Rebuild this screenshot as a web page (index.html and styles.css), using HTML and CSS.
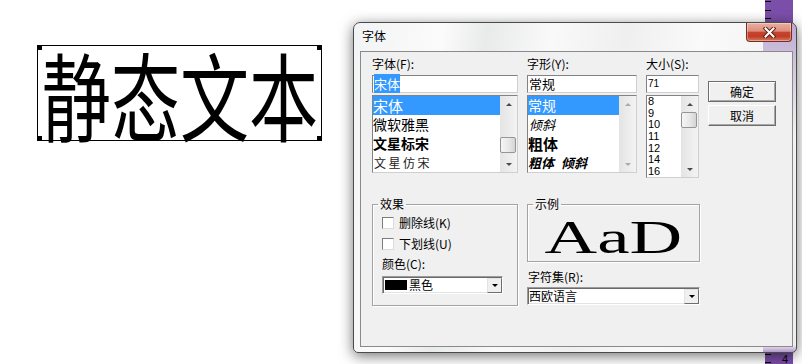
FILE: index.html
```html
<!DOCTYPE html>
<html lang="zh-CN">
<head>
<meta charset="UTF-8">
<title>字体</title>
<link rel="stylesheet" href="styles.css">
</head>
<body>
<div id="desktop">
  <div class="ruler"><span class="ruler-num">4</span></div>

  <div class="static-box">
    <span class="handle tl"></span>
    <span class="handle tr"></span>
    <span class="handle bl"></span>
    <span class="handle br"></span>
    <div class="static-text">静态文本</div>
  </div>

  <div class="dialog">
    <div class="titlebar">
      <span class="title">字体</span>
      <button class="close">
        <svg width="13" height="11" viewBox="0 0 13 11">
          <path d="M2.5 1.5 L10.5 9.5 M10.5 1.5 L2.5 9.5" stroke="#5e2116" stroke-width="4" stroke-linecap="square"/>
          <path d="M2.5 1.5 L10.5 9.5 M10.5 1.5 L2.5 9.5" stroke="#fff" stroke-width="2" stroke-linecap="square"/>
        </svg>
      </button>
    </div>

    <div class="client">
      <div class="top">
        <div class="col col-font">
          <label>字体(F):</label>
          <div class="edit"><span class="sel">宋体</span></div>
          <div class="listbox">
            <ul class="items fonts">
              <li class="selected">宋体</li>
              <li class="yahei">微软雅黑</li>
              <li class="biaosong">文星标宋</li>
              <li class="fangsong">文星仿宋</li>
            </ul>
            <div class="vscroll">
              <span class="arrow up"></span>
              <div class="track"><span class="thumb"></span></div>
              <span class="arrow down"></span>
            </div>
          </div>
        </div>

        <div class="col col-style">
          <label>字形(Y):</label>
          <div class="edit">常规</div>
          <div class="listbox">
            <ul class="items styles">
              <li class="selected">常规</li>
              <li class="italic">倾斜</li>
              <li class="bold">粗体</li>
              <li class="bold-italic">粗体 倾斜</li>
            </ul>
            <div class="vscroll disabled">
              <span class="arrow up"></span>
              <div class="track"></div>
              <span class="arrow down"></span>
            </div>
          </div>
        </div>

        <div class="col col-size">
          <label>大小(S):</label>
          <div class="edit num">71</div>
          <div class="listbox tall">
            <ul class="items sizes">
              <li>8</li>
              <li>9</li>
              <li>10</li>
              <li>11</li>
              <li>12</li>
              <li>14</li>
              <li>16</li>
            </ul>
            <div class="vscroll">
              <span class="arrow up"></span>
              <div class="track"><span class="thumb"></span></div>
              <span class="arrow down"></span>
            </div>
          </div>
        </div>

        <div class="col col-btns">
          <button class="btn default">确定</button>
          <button class="btn">取消</button>
        </div>
      </div>

      <div class="bottom">
        <fieldset class="group effects">
          <legend>效果</legend>
          <div class="group-body">
            <div class="check"><span class="box"></span>删除线(K)</div>
            <div class="check"><span class="box"></span>下划线(U)</div>
            <div class="color-label">颜色(C):</div>
            <div class="combo color">
              <span class="swatch"></span>
              <span>黑色</span>
              <span class="drop"></span>
            </div>
          </div>
        </fieldset>

        <div class="right-col">
          <fieldset class="group sample">
            <legend>示例</legend>
            <div class="sample-body"><span class="sample-text">AaD</span></div>
          </fieldset>
          <div class="charset-label">字符集(R):</div>
          <div class="combo charset">
            <span>西欧语言</span>
            <span class="drop"></span>
          </div>
        </div>
      </div>
    </div>
  </div>
</div>
</body>
</html>
```

FILE: styles.css
```css
* {
  box-sizing: border-box;
}
body {
  margin: 0;
  background: #fff;
  font-family: "Noto Sans CJK SC", "Liberation Sans", sans-serif;
  font-size: 12px;
  color: #000;
}
#desktop {
  position: relative;
  width: 802px;
  height: 364px;
  overflow: hidden;
}

/* purple ruler behind the dialog */
.ruler {
  position: absolute;
  left: 765px;
  top: 0;
  width: 28px;
  height: 364px;
  background:
    repeating-linear-gradient(to bottom, #000 0, #000 1px, transparent 1px, transparent 8.6px) 0 1px / 6px 100% no-repeat,
    #7b4fa9;
  display: flex;
  flex-direction: column;
  justify-content: flex-end;
  align-items: flex-end;
}
.ruler-num {
  font-family: "Liberation Sans", sans-serif;
  font-size: 11px;
  line-height: 9px;
  margin-right: 5px;
  color: #000;
}

/* static text control */
.static-box {
  position: absolute;
  left: 37px;
  top: 45px;
  width: 285px;
  height: 96px;
  border: 1px solid #000;
  display: flex;
  align-items: center;
  justify-content: center;
}
.static-text {
  font-size: 96px;
  line-height: 1;
  white-space: nowrap;
  transform: scaleX(0.72);
}
.handle {
  position: absolute;
  width: 5px;
  height: 5px;
  background: #000;
}
.handle.tl { left: -1px; top: -1px; }
.handle.tr { right: -1px; top: -1px; }
.handle.bl { left: -1px; bottom: -1px; }
.handle.br { right: -1px; bottom: -1px; }

/* dialog window */
.dialog {
  position: absolute;
  left: 353px;
  top: 22px;
  width: 444px;
  height: 331px;
  border: 1px solid #4b4b4b;
  border-radius: 7px 7px 5px 5px;
  padding: 0 3px 5px 6px;
  display: flex;
  flex-direction: column;
  box-shadow: 0 3px 14px rgba(0, 0, 0, 0.55);
  background:
    linear-gradient(to bottom, rgba(123, 79, 169, 0.45), rgba(123, 79, 169, 0) 110px) right 0 top 0 / 33px 100% no-repeat,
    linear-gradient(to top, rgba(123, 79, 169, 0.55), rgba(123, 79, 169, 0) 7px) right 0 top 0 / 33px 100% no-repeat,
    linear-gradient(100deg, #f2f3f4 0%, #fbfbfb 18%, #e9eaea 27%, #f9f9f9 40%, #efefef 55%, #fafafa 70%, #eeeeee 100%);
}
.titlebar {
  height: 28px;
  display: flex;
  justify-content: space-between;
  align-items: flex-start;
  padding-left: 2px;
}
.title {
  margin-top: 6px;
  line-height: 14px;
}
.close {
  width: 46px;
  height: 19px;
  margin-right: 1px;
  padding: 0;
  border: 1px solid #7a2c20;
  border-top: none;
  border-radius: 0 0 4px 4px;
  display: flex;
  align-items: center;
  justify-content: center;
  background: linear-gradient(to bottom, #eab0a2 0%, #dc8d7b 45%, #c6432d 52%, #c03e27 75%, #d47a63 100%);
  box-shadow: inset 0 0 0 1px rgba(255, 255, 255, 0.35);
}

.client {
  flex: 1;
  background: #f0f0f0;
  border: 1px solid #8a8a8a;
  padding: 5px 0 0 11px;
}
.top {
  display: flex;
  align-items: flex-start;
  gap: 9px;
}
.col-font { width: 146px; }
.col-style { width: 110px; }
.col-size { width: 53px; }
.col-btns {
  width: 68px;
  padding-top: 24px;
  display: flex;
  flex-direction: column;
  gap: 3px;
}
label, .color-label, .charset-label {
  display: block;
  line-height: 14px;
  white-space: nowrap;
}
label {
  margin-bottom: 4px;
}

.edit {
  height: 18px;
  margin-bottom: 2px;
  padding-left: 1px;
  background: #fff;
  border: 1px solid;
  border-color: #7f8387 #cfcfcf #cfcfcf #7f8387;
  font-size: 13px;
  line-height: 15px;
}
.edit .sel {
  background: #3399ff;
  color: #fff;
}
.edit.num {
  font-family: "Liberation Sans", sans-serif;
  font-size: 10px;
  line-height: 16px;
}

.listbox {
  height: 78px;
  display: flex;
  background: #fff;
  border: 1px solid;
  border-color: #7f8387 #cfcfcf #cfcfcf #7f8387;
}
.listbox.tall {
  height: 83px;
}
.items {
  flex: 1;
  margin: 0;
  padding: 0;
  list-style: none;
  overflow: hidden;
}
.items li {
  height: 19px;
  line-height: 19px;
  white-space: nowrap;
}
.items li.selected {
  background: #3399ff;
  color: #fff;
}
.fonts li:first-child { font-size: 15px; }
.fonts .yahei { font-size: 14px; }
.fonts .biaosong { font-size: 14px; font-weight: bold; }
.fonts .fangsong { font-size: 12px; letter-spacing: 2.5px; color: #222; padding-left: 1px; }
.styles li { font-size: 14px; }
.styles .italic { font-size: 13px; font-style: italic; padding-left: 1px; }
.styles .bold { font-size: 15px; font-weight: bold; }
.styles .bold-italic { font-size: 13px; font-style: italic; font-weight: bold; word-spacing: 4px; }
.sizes li {
  height: 11.7px;
  line-height: 11.7px;
  font-family: "Liberation Sans", sans-serif;
  font-size: 11px;
  padding-left: 1px;
}

.vscroll {
  width: 17px;
  display: flex;
  flex-direction: column;
  background: linear-gradient(to right, #e4e4e4, #f3f3f3);
}
.track {
  flex: 1;
}
.arrow {
  height: 16px;
  display: flex;
  align-items: center;
  justify-content: center;
}
.arrow::after {
  content: "";
  border-left: 3px solid transparent;
  border-right: 3px solid transparent;
}
.arrow.up::after { border-bottom: 3px solid #4a4a4a; }
.arrow.down::after { border-top: 3px solid #4a4a4a; }
.vscroll.disabled .arrow.up::after { border-bottom-color: #a9a9a9; }
.vscroll.disabled .arrow.down::after { border-top-color: #a9a9a9; }
.thumb {
  display: block;
  width: 16px;
  height: 16px;
  border: 1px solid #959595;
  border-radius: 2px;
  background: linear-gradient(to right, #f6f6f6, #e6e6e6 60%, #d4d4d4);
}
.fonts + .vscroll .thumb {
  margin-top: 25px;
}

.btn {
  height: 21px;
  padding: 0;
  font-family: inherit;
  font-size: 12px;
  background: #f0f0f0;
  border: 1px solid;
  border-color: #fff #6d6d6d #6d6d6d #fff;
  box-shadow: inset -1px -1px 0 #a8a8a8;
}
.btn.default {
  border-color: #6d6d6d;
  box-shadow: inset 1px 1px 0 #fff, inset -1px -1px 0 #a8a8a8;
}

.bottom {
  display: flex;
  gap: 9px;
  margin-top: 19px;
}
.group {
  margin: 0;
  padding: 0;
  min-width: 0;
  border: 1px solid #a3a3a3;
  box-shadow: inset 1px 1px 0 #fff, 1px 1px 0 #fff;
}
.group legend {
  margin-left: 5px;
  padding: 0 2px;
  line-height: 14px;
}
.effects {
  width: 146px;
  height: 109px;
}
.group-body {
  padding: 5px 0 0 9px;
}
.check {
  height: 13px;
  display: flex;
  align-items: center;
  gap: 5px;
  margin-bottom: 8px;
  white-space: nowrap;
}
.check .box {
  width: 12px;
  height: 12px;
  background: #fff;
  border: 1px solid;
  border-color: #7d7d7d #dcdcdc #dcdcdc #7d7d7d;
}
.color-label {
  margin-top: -1px;
  margin-bottom: 5px;
}

.combo {
  height: 18px;
  display: flex;
  align-items: center;
  background: #fff;
  border: 1px solid;
  border-color: #9a9a9a #fff #fff #9a9a9a;
  box-shadow: inset 1px 1px 0 #6a6a6a, inset -1px -1px 0 #e3e3e3;
  padding-left: 2px;
  line-height: 14px;
  white-space: nowrap;
}
.combo.color {
  width: 121px;
}
.swatch {
  width: 22px;
  height: 10px;
  background: #000;
  margin-right: 2px;
}
.drop {
  margin-left: auto;
  width: 15px;
  height: 15px;
  display: flex;
  align-items: center;
  justify-content: center;
  background: #f0f0f0;
  border: 1px solid;
  border-color: #e3e3e3 #6d6d6d #6d6d6d #e3e3e3;
}
.drop::after {
  content: "";
  border-left: 3px solid transparent;
  border-right: 3px solid transparent;
  border-top: 3px solid #000;
}

.right-col {
  width: 173px;
}
.sample {
  height: 65px;
}
.sample-body {
  height: 49px;
  display: flex;
  align-items: flex-end;
  justify-content: center;
  padding-bottom: 3px;
}
.sample-text {
  font-family: "Liberation Serif", serif;
  font-size: 47px;
  line-height: 40px;
  transform: scaleX(1.55);
}
.charset-label {
  margin-top: 8px;
  margin-bottom: 3px;
  padding-left: 1px;
}
.combo.charset {
  width: 173px;
  padding-left: 1px;
}
```
